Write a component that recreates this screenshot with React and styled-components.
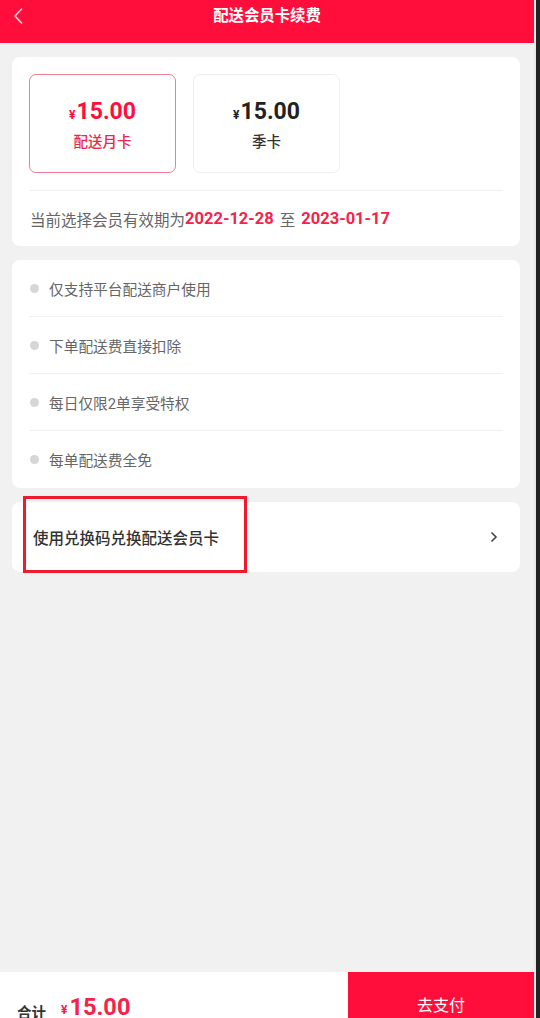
import React from 'react'
import styled, { createGlobalStyle } from 'styled-components'

const GlobalStyle = createGlobalStyle`
  html, body {
    margin: 0;
    padding: 0;
    background: #232323;
    overflow: hidden;
  }
  * { box-sizing: border-box; }
`

const RED = '#ff0e3c'

const Frame = styled.div`
  width: 536px;
  height: 1042px;
  display: flex;
  flex-direction: column;
  background: #f1f1f1;
  border-right: 2px solid #e9e9e9;
  font-family: Roboto, "Noto Sans CJK SC", sans-serif;
  color: #333;
`

const Header = styled.header`
  height: 43px;
  flex-shrink: 0;
  background: ${RED};
  position: relative;

  .bar {
    height: 28px;
    display: flex;
    align-items: center;
    justify-content: center;
    color: #fff;
    font-size: 15.4px;
    font-weight: 700;
  }

  .back {
    position: absolute;
    left: 12px;
    top: 7px;
  }
`

const Main = styled.main`
  flex: 1;
  padding: 14px 14px 0 12px;
  display: flex;
  flex-direction: column;
  gap: 14px;
`

const Card = styled.section`
  background: #fff;
  border-radius: 8px;
  padding: ${(p) => p.pad || '0 17px'};
  position: relative;
`

const Options = styled.div`
  display: flex;
  gap: 17px;
  padding-bottom: 17px;
  border-bottom: 1px solid #f0f0f0;
`

const Option = styled.div`
  width: 147px;
  height: 99px;
  border-radius: 7px;
  border: 1px solid ${(p) => (p.active ? '#f17c90' : '#eeeeee')};
  display: flex;
  flex-direction: column;
  align-items: center;
  justify-content: center;
  color: ${(p) => (p.active ? RED : '#222')};

  .price {
    font-size: 23px;
    font-weight: 700;
    line-height: 26px;
    margin-top: 2px;
  }
  .yen {
    font-size: 12px;
    margin-right: 1px;
    font-weight: 700;
  }
  .name {
    font-size: 14.5px;
    margin-top: 2px;
    font-weight: 500;
    color: ${(p) => (p.active ? '#e8294a' : '#333')};
  }
`

const Period = styled.div`
  height: 55px;
  display: flex;
  align-items: center;
  padding-left: 1px;
  font-size: 15.5px;
  color: #666;

  b {
    color: #f5224a;
    font-size: 16.5px;
    font-weight: 700;
  }
  .sep {
    margin: 0 6px;
  }
`

const Row = styled.div`
  height: 57px;
  display: flex;
  align-items: center;
  gap: 10px;
  font-size: 14.7px;
  color: #666;
  border-bottom: ${(p) => (p.last ? 'none' : '1px solid #f0f0f0')};
  padding-left: 1px;

  &::before {
    content: '';
    width: 9px;
    height: 9px;
    border-radius: 50%;
    background: #d6d6d6;
  }
`

const Redeem = styled.div`
  height: 70px;
  display: flex;
  align-items: center;
  justify-content: space-between;
  padding: 0 22px 0 21px;
  font-size: 15.5px;
  font-weight: 500;
  color: #333;
`

const Mark = styled.div`
  position: absolute;
  left: 11px;
  top: -6px;
  width: 224px;
  height: 77px;
  border: 3px solid #f01a2e;
  pointer-events: none;
`

const Footer = styled.footer`
  height: 70px;
  flex-shrink: 0;
  background: #fff;
  display: flex;
  align-items: stretch;

  .total {
    flex: 1;
    display: flex;
    align-items: center;
    padding-left: 17px;
  }
  .label {
    font-size: 14.5px;
    font-weight: 700;
    color: #333;
    margin-right: 15px;
    padding-top: 8px;
  }
  .yen {
    color: #f5224a;
    font-size: 12px;
    font-weight: 700;
    margin-right: 2px;
    padding-top: 6px;
  }
  .amount {
    color: #f5224a;
    font-size: 23.6px;
    font-weight: 700;
  }
`

const PayButton = styled.button`
  width: 186px;
  border: none;
  background: ${RED};
  color: #fff;
  font-family: inherit;
  font-size: 16px;
  padding: 0 0 6px;
`

const benefits = ['仅支持平台配送商户使用', '下单配送费直接扣除', '每日仅限2单享受特权', '每单配送费全免']

export default function App() {
  return (
    <Frame>
      <GlobalStyle />
      <Header>
        <svg className="back" width="12" height="18" viewBox="0 0 12 18" fill="none">
          <path d="M10 1.5 L3 9 L10 16.5" stroke="#ffd0da" strokeWidth="1.6" />
        </svg>
        <div className="bar">配送会员卡续费</div>
      </Header>
      <Main>
        <Card pad="17px 17px 0">
          <Options>
            <Option active>
              <div className="price"><span className="yen">¥</span>15.00</div>
              <div className="name">配送月卡</div>
            </Option>
            <Option>
              <div className="price"><span className="yen">¥</span>15.00</div>
              <div className="name">季卡</div>
            </Option>
          </Options>
          <Period>
            当前选择会员有效期为<b>2022-12-28</b><span className="sep">至</span><b>2023-01-17</b>
          </Period>
        </Card>
        <Card>
          {benefits.map((t, i) => (
            <Row key={t} last={i === benefits.length - 1}>{t}</Row>
          ))}
        </Card>
        <Card pad="0">
          <Redeem>
            使用兑换码兑换配送会员卡
            <svg width="8" height="12" viewBox="0 0 8 12" fill="none">
              <path d="M1.5 1.5 L6 6 L1.5 10.5" stroke="#444" strokeWidth="1.6" />
            </svg>
          </Redeem>
          <Mark />
        </Card>
      </Main>
      <Footer>
        <div className="total">
          <span className="label">合计</span>
          <span className="yen">¥</span>
          <span className="amount">15.00</span>
        </div>
        <PayButton>去支付</PayButton>
      </Footer>
    </Frame>
  )
}
